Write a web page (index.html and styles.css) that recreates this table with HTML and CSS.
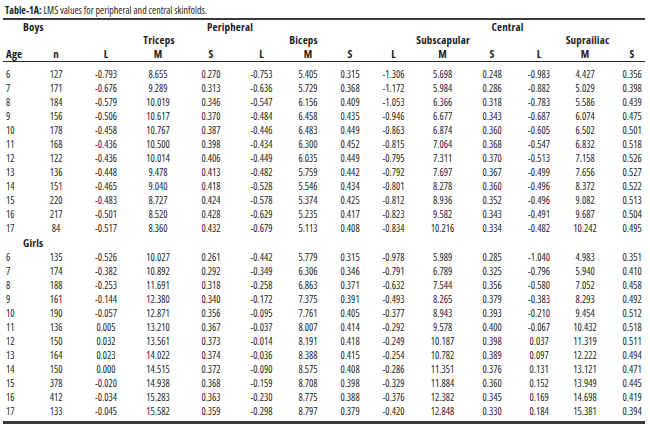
FILE: index.html
```html
<!DOCTYPE html>
<html>
<head>
<meta charset="utf-8">
<link rel="stylesheet" href="styles.css">
</head>
<body>
<div class="caption"><b>Table-1A:</b> LMS values for peripheral and central skinfolds.</div>
<table class="lms">
<colgroup>
<col class="c-age"><col class="c-n"><col class="c-l1"><col class="c-m1"><col class="c-s1"><col class="c-l2"><col class="c-m2"><col class="c-s2"><col class="c-l3"><col class="c-m3"><col class="c-s3"><col class="c-l4"><col class="c-m4"><col class="c-s4">
</colgroup>
<thead>
<tr class="h1"><th colspan="2" class="grp">Boys</th><th colspan="6" class="peri">Peripheral</th><th colspan="6">Central</th></tr>
<tr class="h2"><th colspan="2"></th><th colspan="3">Triceps</th><th colspan="3">Biceps</th><th colspan="3">Subscapular</th><th colspan="3" class="supra">Suprailiac</th></tr>
<tr class="h3"><th class="age">Age</th><th>n</th><th>L</th><th>M</th><th>S</th><th>L</th><th>M</th><th>S</th><th>L</th><th>M</th><th>S</th><th>L</th><th>M</th><th class="last">S</th></tr>
</thead>
<tbody>
<tr class="first"><td class="age">6</td><td>127</td><td>-0.793</td><td>8.655</td><td>0.270</td><td>-0.753</td><td>5.405</td><td>0.315</td><td>-1.306</td><td>5.698</td><td>0.248</td><td>-0.983</td><td>4.427</td><td class="last">0.356</td></tr>
<tr><td class="age">7</td><td>171</td><td>-0.676</td><td>9.289</td><td>0.313</td><td>-0.636</td><td>5.729</td><td>0.368</td><td>-1.172</td><td>5.984</td><td>0.286</td><td>-0.882</td><td>5.029</td><td class="last">0.398</td></tr>
<tr><td class="age">8</td><td>184</td><td>-0.579</td><td>10.019</td><td>0.346</td><td>-0.547</td><td>6.156</td><td>0.409</td><td>-1.053</td><td>6.366</td><td>0.318</td><td>-0.783</td><td>5.586</td><td class="last">0.439</td></tr>
<tr><td class="age">9</td><td>156</td><td>-0.506</td><td>10.617</td><td>0.370</td><td>-0.484</td><td>6.458</td><td>0.435</td><td>-0.946</td><td>6.677</td><td>0.343</td><td>-0.687</td><td>6.074</td><td class="last">0.475</td></tr>
<tr><td class="age">10</td><td>178</td><td>-0.458</td><td>10.767</td><td>0.387</td><td>-0.446</td><td>6.483</td><td>0.449</td><td>-0.863</td><td>6.874</td><td>0.360</td><td>-0.605</td><td>6.502</td><td class="last">0.501</td></tr>
<tr><td class="age">11</td><td>168</td><td>-0.436</td><td>10.500</td><td>0.398</td><td>-0.434</td><td>6.300</td><td>0.452</td><td>-0.815</td><td>7.064</td><td>0.368</td><td>-0.547</td><td>6.832</td><td class="last">0.518</td></tr>
<tr><td class="age">12</td><td>122</td><td>-0.436</td><td>10.014</td><td>0.406</td><td>-0.449</td><td>6.035</td><td>0.449</td><td>-0.795</td><td>7.311</td><td>0.370</td><td>-0.513</td><td>7.158</td><td class="last">0.526</td></tr>
<tr><td class="age">13</td><td>136</td><td>-0.448</td><td>9.478</td><td>0.413</td><td>-0.482</td><td>5.759</td><td>0.442</td><td>-0.792</td><td>7.697</td><td>0.367</td><td>-0.499</td><td>7.656</td><td class="last">0.527</td></tr>
<tr><td class="age">14</td><td>151</td><td>-0.465</td><td>9.040</td><td>0.418</td><td>-0.528</td><td>5.546</td><td>0.434</td><td>-0.801</td><td>8.278</td><td>0.360</td><td>-0.496</td><td>8.372</td><td class="last">0.522</td></tr>
<tr><td class="age">15</td><td>220</td><td>-0.483</td><td>8.727</td><td>0.424</td><td>-0.578</td><td>5.374</td><td>0.425</td><td>-0.812</td><td>8.936</td><td>0.352</td><td>-0.496</td><td>9.082</td><td class="last">0.513</td></tr>
<tr><td class="age">16</td><td>217</td><td>-0.501</td><td>8.520</td><td>0.428</td><td>-0.629</td><td>5.235</td><td>0.417</td><td>-0.823</td><td>9.582</td><td>0.343</td><td>-0.491</td><td>9.687</td><td class="last">0.504</td></tr>
<tr><td class="age">17</td><td>84</td><td>-0.517</td><td>8.360</td><td>0.432</td><td>-0.679</td><td>5.113</td><td>0.408</td><td>-0.834</td><td>10.216</td><td>0.334</td><td>-0.482</td><td>10.242</td><td class="last">0.495</td></tr>
<tr class="girls"><th colspan="14" class="grp">Girls</th></tr>
<tr><td class="age">6</td><td>135</td><td>-0.526</td><td>10.027</td><td>0.261</td><td>-0.442</td><td>5.779</td><td>0.315</td><td>-0.978</td><td>5.989</td><td>0.285</td><td>-1.040</td><td>4.983</td><td class="last">0.351</td></tr>
<tr><td class="age">7</td><td>174</td><td>-0.382</td><td>10.892</td><td>0.292</td><td>-0.349</td><td>6.306</td><td>0.346</td><td>-0.791</td><td>6.789</td><td>0.325</td><td>-0.796</td><td>5.940</td><td class="last">0.410</td></tr>
<tr><td class="age">8</td><td>188</td><td>-0.253</td><td>11.691</td><td>0.318</td><td>-0.258</td><td>6.863</td><td>0.371</td><td>-0.632</td><td>7.544</td><td>0.356</td><td>-0.580</td><td>7.052</td><td class="last">0.458</td></tr>
<tr><td class="age">9</td><td>161</td><td>-0.144</td><td>12.380</td><td>0.340</td><td>-0.172</td><td>7.375</td><td>0.391</td><td>-0.493</td><td>8.265</td><td>0.379</td><td>-0.383</td><td>8.293</td><td class="last">0.492</td></tr>
<tr><td class="age">10</td><td>190</td><td>-0.057</td><td>12.871</td><td>0.356</td><td>-0.095</td><td>7.761</td><td>0.405</td><td>-0.377</td><td>8.943</td><td>0.393</td><td>-0.210</td><td>9.454</td><td class="last">0.512</td></tr>
<tr><td class="age">11</td><td>136</td><td>0.005</td><td>13.210</td><td>0.367</td><td>-0.037</td><td>8.007</td><td>0.414</td><td>-0.292</td><td>9.578</td><td>0.400</td><td>-0.067</td><td>10.432</td><td class="last">0.518</td></tr>
<tr><td class="age">12</td><td>150</td><td>0.032</td><td>13.561</td><td>0.373</td><td>-0.014</td><td>8.191</td><td>0.418</td><td>-0.249</td><td>10.187</td><td>0.398</td><td>0.037</td><td>11.319</td><td class="last">0.511</td></tr>
<tr><td class="age">13</td><td>164</td><td>0.023</td><td>14.022</td><td>0.374</td><td>-0.036</td><td>8.388</td><td>0.415</td><td>-0.254</td><td>10.782</td><td>0.389</td><td>0.097</td><td>12.222</td><td class="last">0.494</td></tr>
<tr><td class="age">14</td><td>150</td><td>0.000</td><td>14.515</td><td>0.372</td><td>-0.090</td><td>8.575</td><td>0.408</td><td>-0.286</td><td>11.351</td><td>0.376</td><td>0.131</td><td>13.121</td><td class="last">0.471</td></tr>
<tr><td class="age">15</td><td>378</td><td>-0.020</td><td>14.938</td><td>0.368</td><td>-0.159</td><td>8.708</td><td>0.398</td><td>-0.329</td><td>11.884</td><td>0.360</td><td>0.152</td><td>13.949</td><td class="last">0.445</td></tr>
<tr><td class="age">16</td><td>412</td><td>-0.034</td><td>15.283</td><td>0.363</td><td>-0.230</td><td>8.775</td><td>0.388</td><td>-0.376</td><td>12.382</td><td>0.345</td><td>0.169</td><td>14.698</td><td class="last">0.419</td></tr>
<tr class="end"><td class="age">17</td><td>133</td><td>-0.045</td><td>15.582</td><td>0.359</td><td>-0.298</td><td>8.797</td><td>0.379</td><td>-0.420</td><td>12.848</td><td>0.330</td><td>0.184</td><td>15.381</td><td class="last">0.394</td></tr>
</tbody>
</table>
</body>
</html>
```

FILE: styles.css
```css
html, body {
  margin: 0;
  padding: 0;
  background: #ffffff;
}
body {
  font-family: "Open Sans", "Roboto", "Noto Sans", sans-serif;
  font-stretch: 75%;
  font-size: 10px;
  color: #1e1e1e;
}
.caption {
  padding: 3px 0 0 5px;
  height: 15px;
  line-height: 14px;
  font-size: 10px;
  white-space: nowrap;
}
.caption b {
  font-weight: bold;
}
.lms {
  margin-left: 3px;
  width: 642px;
  table-layout: fixed;
  border-collapse: collapse;
  border-top: 2px solid #3c3c3c;
}
.lms th, .lms td {
  padding: 0;
  text-align: center;
  white-space: nowrap;
  vertical-align: middle;
}
.lms th {
  font-weight: bold;
  font-size: 11px;
  letter-spacing: 0.15px;
}
.c-age { width: 28px; }
.c-n { width: 50px; }
.c-l1 { width: 50px; }
.c-m1 { width: 54px; }
.c-s1 { width: 52px; }
.c-l2 { width: 49px; }
.c-m2 { width: 44px; }
.c-s2 { width: 40px; }
.c-l3 { width: 47px; }
.c-m3 { width: 51px; }
.c-s3 { width: 48px; }
.c-l4 { width: 46px; }
.c-m4 { width: 46px; }
.c-s4 { width: 37px; }

.h1 th { height: 13px; line-height: 13px; }
.h2 th { height: 14px; line-height: 14px; }
.h3 th {
  height: 14px;
  line-height: 14px;
  border-bottom: 1px solid #2a2a2a;
}
.lms th.grp {
  text-align: left;
  padding-left: 20px;
}
.lms th.peri { padding-left: 9px; }
.lms th.supra { padding-left: 14px; }
.lms .age {
  text-align: left;
  padding-left: 3px;
}
.lms .last { padding-left: 11px; }

.lms tbody tr { height: 14.05px; }
.lms tbody td { line-height: 14px; }
.lms tbody th { line-height: 14px; height: 14.05px; }
.lms tr.first td {
  padding-top: 5px;
}
.lms tr.end td {
  padding-bottom: 3px;
  border-bottom: 3px solid #3c3c3c;
}
```
